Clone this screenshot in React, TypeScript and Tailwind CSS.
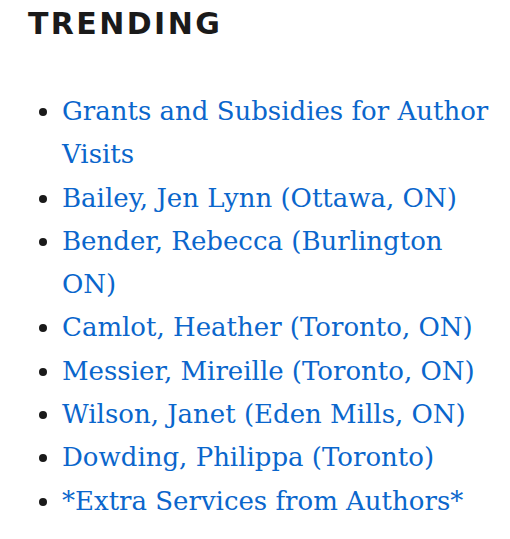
const items = [
  'Grants and Subsidies for Author Visits',
  'Bailey, Jen Lynn (Ottawa, ON)',
  'Bender, Rebecca (Burlington ON)',
  'Camlot, Heather (Toronto, ON)',
  'Messier, Mireille (Toronto, ON)',
  'Wilson, Janet (Eden Mills, ON)',
  'Dowding, Philippa (Toronto)',
  '*Extra Services from Authors*',
];

export default function App() {
  return (
    <div className="min-h-[539px] w-[510px] bg-white pl-[28px] pt-[4px]">
      <h2 className="font-['DejaVu_Sans',sans-serif] text-[30px] font-bold leading-[40px] tracking-[2.4px] text-[#1a1a1a]">
        TRENDING
      </h2>
      <ul className="mt-[46px] w-[466px] list-disc pl-[34px] font-['DejaVu_Serif',serif] text-[26px] leading-[43.3px] text-[#1a1a1a]">
        {items.map((item) => (
          <li key={item}>
            <a href="#" className="text-[#0a66cc]">
              {item}
            </a>
          </li>
        ))}
      </ul>
    </div>
  );
}
